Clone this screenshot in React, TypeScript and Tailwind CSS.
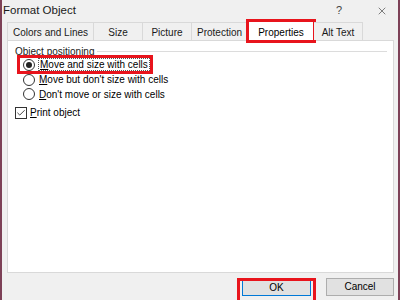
import { Check, X } from 'lucide-react';

const tabs = [
  { label: 'Colors and Lines', w: 'w-[87px]' },
  { label: 'Size', w: 'w-[49px]' },
  { label: 'Picture', w: 'w-[49px]' },
  { label: 'Protection', w: 'w-[56px]' },
  { label: 'Properties', w: 'w-[66px]', active: true },
  { label: 'Alt Text', w: 'w-[49px]' },
];

function Radio({ checked }: { checked?: boolean }) {
  return (
    <span className="w-[12px] h-[12px] rounded-full border border-[#333] bg-white flex items-center justify-center shrink-0">
      {checked && <span className="w-[6px] h-[6px] rounded-full bg-[#222]" />}
    </span>
  );
}

export default function App() {
  return (
    <div
      className="w-[400px] h-[300px] bg-[#f0f0f0] border-l-2 border-r-2 border-[#7d4157] flex flex-col overflow-hidden text-[10px] text-black"
      style={{ fontFamily: '"Liberation Sans", Arial, sans-serif' }}
    >
      {/* Title bar */}
      <div className="h-[21px] flex items-center pl-[1px] pr-[10px] shrink-0">
        <span className="text-[11.5px] text-[#1a1a1a]">Format Object</span>
        <span className="ml-auto mr-[34px] text-[11px] text-[#444]">?</span>
        <X className="w-[12px] h-[12px] text-[#555]" strokeWidth={1.5} />
      </div>

      {/* Tabs */}
      <div className="flex items-end pl-[5px] h-[19px] shrink-0 relative z-10">
        {tabs.map((t) =>
          t.active ? (
            <div
              key={t.label}
              className={`${t.w} h-[20px] -mb-[1px] pt-[1px] bg-white border border-[#d9d9d9] border-b-0 flex items-center justify-center outline-[3px] outline-[#e8141c] outline-offset-[-1px]`}
            >
              Properties
            </div>
          ) : (
            <div
              key={t.label}
              className={`${t.w} h-[18px] pt-[1px] bg-[#f0f0f0] border border-[#d9d9d9] border-b-0 border-l-0 first:border-l flex items-center justify-center text-[#1a1a1a]`}
            >
              {t.label}
            </div>
          )
        )}
      </div>

      {/* Panel */}
      <div className="mx-[5px] mr-[4px] h-[233px] bg-white border border-[#d9d9d9] shrink-0 pt-[3px] pl-[7px] pr-[6px]">
        <div className="flex items-center gap-[2px] h-[14px]">
          <span className="text-[#1a1a1a]">Object positioning</span>
          <span className="flex-1 h-px bg-[#dcdcdc]" />
        </div>

        <div className="flex flex-col pl-[8px] -mt-[1px]">
          <div className="h-[15px] w-[132px] -ml-[4px] pl-[4px] flex items-center gap-[3px] outline-[3px] outline-[#e8141c] outline-offset-[-1px]">
            <Radio checked />
            <span className="border border-dotted border-[#555] px-[1px] leading-[11px]">
              <u>M</u>ove and size with cells
            </span>
          </div>
          <div className="h-[15px] flex items-center gap-[4px]">
            <Radio />
            <span>
              <u>M</u>ove but don't size with cells
            </span>
          </div>
          <div className="h-[14px] flex items-center gap-[4px]">
            <Radio />
            <span>
              <u>D</u>on't move or size with cells
            </span>
          </div>
        </div>

        <div className="flex items-center gap-[3px] mt-[4px]">
          <span className="w-[12px] h-[12px] border border-[#333] bg-white flex items-center justify-center">
            <Check className="w-[10px] h-[10px] text-[#222]" strokeWidth={2} />
          </span>
          <span>
            <u>P</u>rint object
          </span>
        </div>
      </div>

      {/* Buttons */}
      <div className="flex justify-end gap-[10px] pr-[4px] mt-[5px]">
        <div className="w-[79px] h-[25px] px-[4px] pt-[2px] outline-[3px] outline-[#e8141c] outline-offset-[-3px] flex justify-center">
          <button className="w-[69px] h-[16px] bg-[#e1e1e1] border border-[#0078d7] text-[10px] leading-[14px]">
            OK
          </button>
        </div>
        <button className="w-[68px] h-[18px] bg-[#e1e1e1] border border-[#adadad] text-[10px] leading-[16px]">
          Cancel
        </button>
      </div>
    </div>
  );
}
